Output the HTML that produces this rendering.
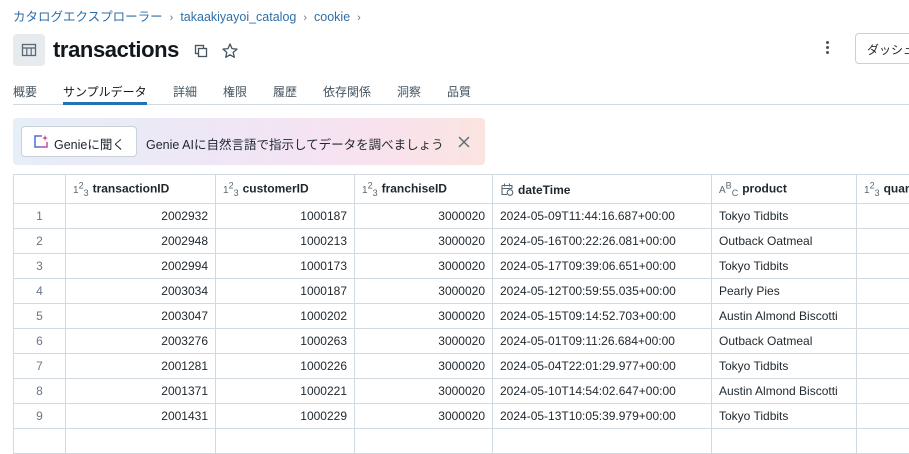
<!DOCTYPE html>
<html><head><meta charset="utf-8"><style>
*{box-sizing:border-box;margin:0;padding:0}
body{width:909px;height:436px;overflow:hidden;background:#fff;font-family:"Liberation Sans","Noto Sans CJK JP",sans-serif;color:#1f272d;position:relative}
.a{position:absolute}
.bc{top:6px;left:13px;font-size:12.5px;color:#2f6ea8;white-space:nowrap}
.bc span.s{color:#6b7785;font-size:11px;margin:0 7px}
.ic{left:13px;top:34px;width:32px;height:32px;background:#e8ebee;border-radius:4px}
.title{left:53px;top:37px;font-size:22px;font-weight:bold;color:#11171c;letter-spacing:-0.4px}
.tabs{left:13px;top:83px;font-size:12px;color:#445461;white-space:nowrap}
.tabs span{position:absolute;top:0}
.tline{left:13px;right:0;top:104px;height:1px;background:#d1d9e1}
.tact{left:63px;width:84px;top:102px;height:3px;background:#2272b4}
.gen{left:13px;top:118px;width:472px;height:47px;border-radius:4px;background:linear-gradient(90deg,#e6eef8 0%,#efe6f6 45%,#f8e2ef 75%,#fbe4e0 100%)}
.gbtn{left:21px;top:126px;width:116px;height:31px;background:#fff;border:1px solid #c8d0d8;border-radius:4px;font-size:12.5px;padding:7px 0 0 32px;color:#1f272d}
table{position:absolute;left:13px;top:174px;border-collapse:collapse;font-size:12px;table-layout:fixed;width:930px}
td,th{border:1px solid #d1d9e1;height:25px;padding:0 7px;white-space:nowrap;overflow:hidden}
th{height:29px;text-align:left;font-weight:bold;color:#1f272d}
td.n{text-align:right}
td.r{text-align:center;color:#6b7785}
sup,sub{font-size:9px;font-weight:normal;color:#5a6873}
.t{font-size:10px;color:#5a6873;font-weight:normal;margin-right:4px}
</style></head><body>
<div class="a bc">カタログエクスプローラー<span class="s">›</span>takaakiyayoi_catalog<span class="s">›</span>cookie<span class="s">›</span></div>
<div class="a ic"><svg width="32" height="32"><rect x="9.5" y="10.5" width="13" height="11" fill="none" stroke="#5a6873" stroke-width="1.3"/><line x1="9.5" y1="14" x2="22.5" y2="14" stroke="#5a6873" stroke-width="1.3"/><line x1="13.8" y1="14" x2="13.8" y2="21.5" stroke="#5a6873" stroke-width="1.2"/><line x1="18.2" y1="14" x2="18.2" y2="21.5" stroke="#5a6873" stroke-width="1.2"/></svg></div>
<div class="a title">transactions</div>
<svg class="a" style="left:193px;top:43px" width="16" height="16"><rect x="2.5" y="2.5" width="8" height="8" fill="none" stroke="#445461" stroke-width="1.3"/><rect x="5.5" y="5.5" width="8" height="8" fill="#fff" stroke="#445461" stroke-width="1.3"/></svg>
<svg class="a" style="left:221px;top:42px" width="18" height="18"><path d="M9 2l2 4.6 5 .5-3.8 3.3 1.1 4.9L9 12.8 4.7 15.3l1.1-4.9L2 7.1l5-.5z" fill="none" stroke="#445461" stroke-width="1.3" stroke-linejoin="round"/></svg>
<div class="a" style="left:826px;top:41px;width:4px"><div style="width:3px;height:3px;background:#445461;border-radius:50%;margin-bottom:2px"></div><div style="width:3px;height:3px;background:#445461;border-radius:50%;margin-bottom:2px"></div><div style="width:3px;height:3px;background:#445461;border-radius:50%"></div></div>
<div class="a" style="left:855px;top:33px;width:70px;height:31px;border:1px solid #c8d0d8;border-radius:4px;font-size:12px;padding:7px 0 0 11px">ダッシュ</div>
<div class="a tabs"><span style="left:0">概要</span><span style="left:50px;color:#11171c">サンプルデータ</span><span style="left:160px">詳細</span><span style="left:210px">権限</span><span style="left:260px">履歴</span><span style="left:310px">依存関係</span><span style="left:384px">洞察</span><span style="left:434px">品質</span></div>
<div class="a tline"></div><div class="a tact"></div>
<div class="a gen"></div>
<div class="a gbtn">Genieに聞く</div>
<svg class="a" style="left:33px;top:134px" width="17" height="15"><path d="M9 2H2v11h12V8" fill="none" stroke="url(#g)" stroke-width="1.5"/><path d="M12 1l.8 2.2 2.2.8-2.2.8L12 7l-.8-2.2L9 4l2.2-.8z" fill="#c94b8a"/><defs><linearGradient id="g" x1="0" x2="1"><stop offset="0" stop-color="#4a6be0"/><stop offset="1" stop-color="#d84a8a"/></linearGradient></defs></svg>
<div class="a" style="left:146px;top:134px;font-size:12.5px;color:#1f272d">Genie AIに自然言語で指示してデータを調べましょう</div>
<svg class="a" style="left:457px;top:135px" width="14" height="14"><path d="M2 2l10 10M12 2L2 12" stroke="#5a6873" stroke-width="1.4"/></svg>
<table>
<colgroup><col style="width:52px"><col style="width:150px"><col style="width:139px"><col style="width:138px"><col style="width:219px"><col style="width:145px"><col style="width:87px"></colgroup>
<tr><th></th><th><span class="t">1<sup>2</sup><sub>3</sub></span>transactionID</th><th><span class="t">1<sup>2</sup><sub>3</sub></span>customerID</th><th><span class="t">1<sup>2</sup><sub>3</sub></span>franchiseID</th><th><svg width="14" height="14" style="vertical-align:-2px;margin-right:4px"><path d="M2 3.5h10v3M2 3.5v9h5M2 6.5h10M4.5 1.5v3M9.5 1.5v3" fill="none" stroke="#5a6873" stroke-width="1.1"/><circle cx="10" cy="10.5" r="2.8" fill="none" stroke="#5a6873" stroke-width="1.1"/></svg>dateTime</th><th><span class="t">A<sup>B</sup><sub>C</sub></span>product</th><th><span class="t">1<sup>2</sup><sub>3</sub></span>quantity</th></tr>
<tr><td class="r">1</td><td class="n">2002932</td><td class="n">1000187</td><td class="n">3000020</td><td>2024-05-09T11:44:16.687+00:00</td><td>Tokyo Tidbits</td><td></td></tr>
<tr><td class="r">2</td><td class="n">2002948</td><td class="n">1000213</td><td class="n">3000020</td><td>2024-05-16T00:22:26.081+00:00</td><td>Outback Oatmeal</td><td></td></tr>
<tr><td class="r">3</td><td class="n">2002994</td><td class="n">1000173</td><td class="n">3000020</td><td>2024-05-17T09:39:06.651+00:00</td><td>Tokyo Tidbits</td><td></td></tr>
<tr><td class="r">4</td><td class="n">2003034</td><td class="n">1000187</td><td class="n">3000020</td><td>2024-05-12T00:59:55.035+00:00</td><td>Pearly Pies</td><td></td></tr>
<tr><td class="r">5</td><td class="n">2003047</td><td class="n">1000202</td><td class="n">3000020</td><td>2024-05-15T09:14:52.703+00:00</td><td>Austin Almond Biscotti</td><td></td></tr>
<tr><td class="r">6</td><td class="n">2003276</td><td class="n">1000263</td><td class="n">3000020</td><td>2024-05-01T09:11:26.684+00:00</td><td>Outback Oatmeal</td><td></td></tr>
<tr><td class="r">7</td><td class="n">2001281</td><td class="n">1000226</td><td class="n">3000020</td><td>2024-05-04T22:01:29.977+00:00</td><td>Tokyo Tidbits</td><td></td></tr>
<tr><td class="r">8</td><td class="n">2001371</td><td class="n">1000221</td><td class="n">3000020</td><td>2024-05-10T14:54:02.647+00:00</td><td>Austin Almond Biscotti</td><td></td></tr>
<tr><td class="r">9</td><td class="n">2001431</td><td class="n">1000229</td><td class="n">3000020</td><td>2024-05-13T10:05:39.979+00:00</td><td>Tokyo Tidbits</td><td></td></tr>
<tr><td class="r"></td><td></td><td></td><td></td><td></td><td></td><td></td></tr>
</table>
</body></html>
